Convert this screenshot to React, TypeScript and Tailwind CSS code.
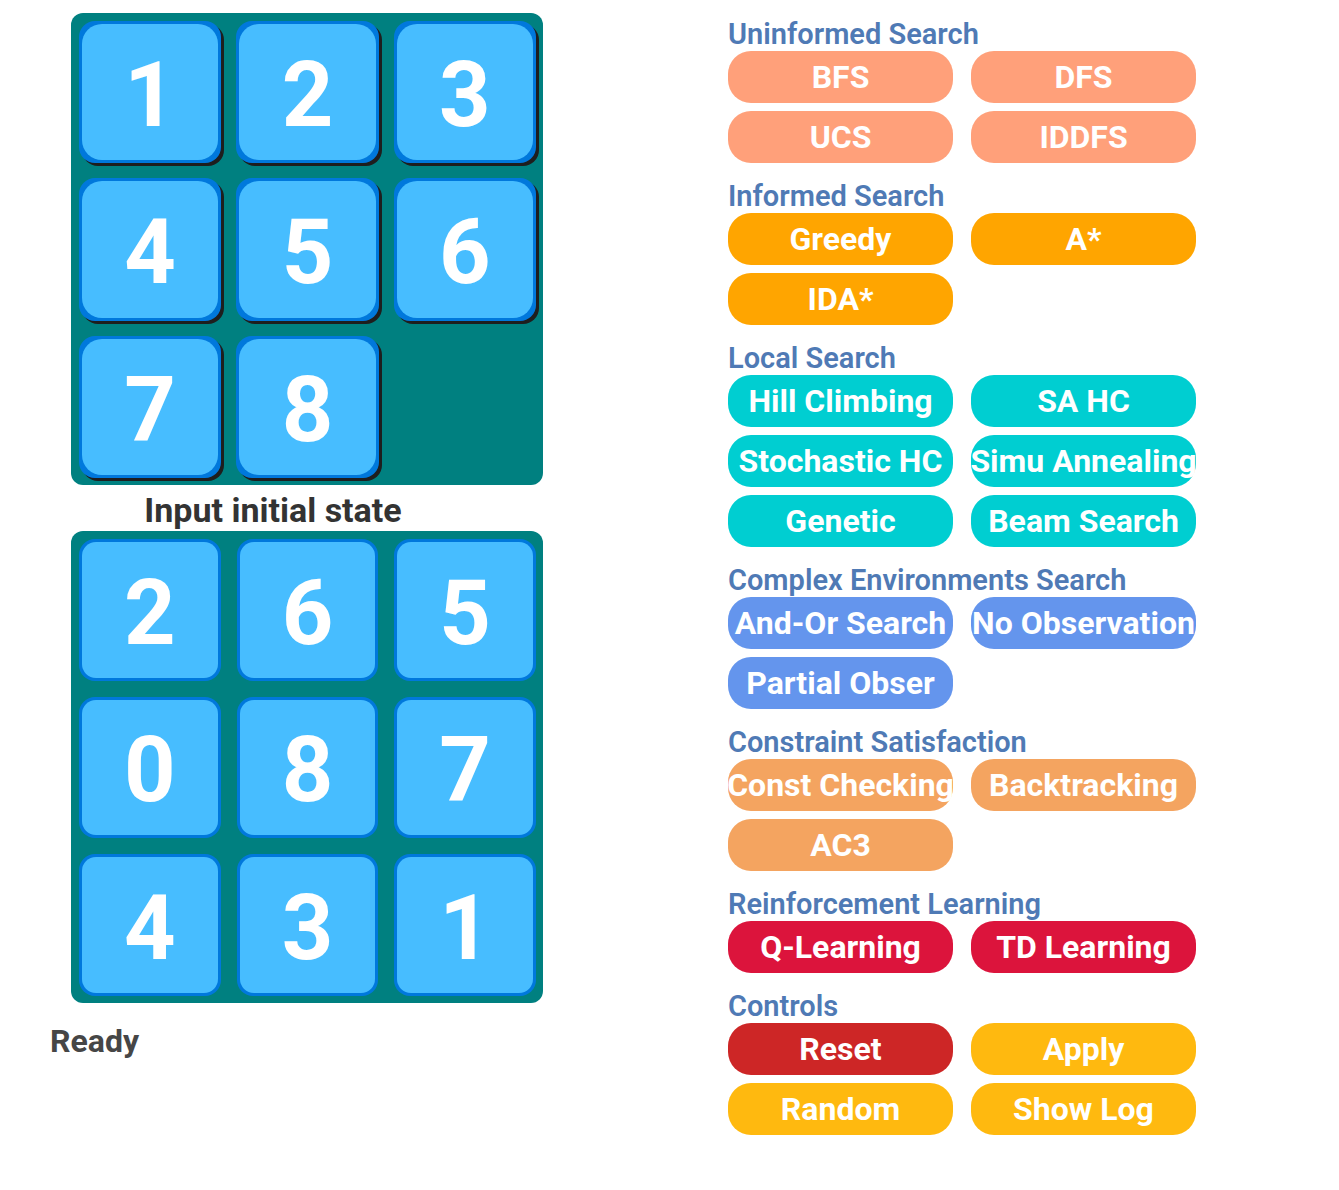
const FONT = "font-[Roboto,'Liberation_Sans',sans-serif] font-bold";

type Action = { label: string; color: string };
type Group = { title: string; actions: Action[] };

const make = (color: string, labels: string[]): Action[] =>
  labels.map((label) => ({ label, color }));

const GROUPS: Group[] = [
  { title: "Uninformed Search", actions: make("bg-[#ffa07a]", ["BFS", "DFS", "UCS", "IDDFS"]) },
  { title: "Informed Search", actions: make("bg-[#ffa500]", ["Greedy", "A*", "IDA*"]) },
  {
    title: "Local Search",
    actions: make("bg-[#00ced1]", [
      "Hill Climbing",
      "SA HC",
      "Stochastic HC",
      "Simu Annealing",
      "Genetic",
      "Beam Search",
    ]),
  },
  {
    title: "Complex Environments Search",
    actions: make("bg-[#6495ed]", ["And-Or Search", "No Observation", "Partial Obser"]),
  },
  {
    title: "Constraint Satisfaction",
    actions: make("bg-[#f4a460]", ["Const Checking", "Backtracking", "AC3"]),
  },
  { title: "Reinforcement Learning", actions: make("bg-[#dc143c]", ["Q-Learning", "TD Learning"]) },
  {
    title: "Controls",
    actions: [
      { label: "Reset", color: "bg-[#cd2626]" },
      ...make("bg-[#ffb90f]", ["Apply", "Random", "Show Log"]),
    ],
  },
];

const CURRENT = [1, 2, 3, 4, 5, 6, 7, 8, 0];
const INITIAL = [2, 6, 5, 0, 8, 7, 4, 3, 1];

function Tile({ value, raised = false }: { value: number; raised?: boolean }) {
  return (
    <button
      type="button"
      className={`flex aspect-square rounded-[16px] bg-[#0078dc] p-[3px] ${
        raised ? "shadow-[3px_3px_0_#1e1e1e]" : ""
      }`}
    >
      <span
        className={`flex flex-1 items-center justify-center self-stretch bg-[#47bdff] pt-2 text-[90px] leading-none text-white ${
          raised ? "rounded-[20px]" : "rounded-[14px]"
        }`}
      >
        {value}
      </span>
    </button>
  );
}

function CurrentBoard() {
  return (
    <section
      aria-label="Current state"
      className="grid grid-cols-3 gap-[15px] rounded-[12px] bg-[#008080] pt-2 pr-[7px] pb-[7px] pl-2"
    >
      {CURRENT.map((value) =>
        value === 0 ? <span key={value} /> : <Tile key={value} value={value} raised />,
      )}
    </section>
  );
}

function InitialBoard() {
  return (
    <section
      aria-labelledby="initial-title"
      className="grid grid-cols-3 gap-4 rounded-[12px] bg-[#008080] pt-2 pr-[7px] pb-[7px] pl-2"
    >
      {INITIAL.map((value) => (
        <Tile key={value} value={value} />
      ))}
    </section>
  );
}

function ActionGroup({ title, actions }: Group) {
  return (
    <section>
      <h2 className="flex h-[50px] items-end pb-px text-[29px] leading-8 font-semibold whitespace-nowrap text-[#4f7ab5]">
        {title}
      </h2>
      <div className="grid grid-cols-2 gap-x-[18px] gap-y-2">
        {actions.map(({ label, color }) => (
          <button
            key={label}
            type="button"
            className={`flex h-[52px] items-center justify-center rounded-[23px] text-[32px] leading-none whitespace-nowrap text-white ${color}`}
          >
            {label}
          </button>
        ))}
      </div>
    </section>
  );
}

export default function App() {
  return (
    <main className={`flex min-h-screen items-start justify-between bg-white pr-[143px] pl-[50px] ${FONT}`}>
      <div className="w-[493px] pt-[13px]">
        <div className="pl-[21px]">
          <CurrentBoard />
          <h1
            id="initial-title"
            className="flex h-[46px] items-center justify-center pt-1 pr-[68px] text-[34px] leading-none text-[#333333]"
          >
            Input initial state
          </h1>
          <InitialBoard />
        </div>
        <p role="status" className="pt-[18px] text-[32px] leading-10 text-[#464646]">
          Ready
        </p>
      </div>
      <div className="w-[468px] pt-px">
        {GROUPS.map((group) => (
          <ActionGroup key={group.title} {...group} />
        ))}
      </div>
    </main>
  );
}
